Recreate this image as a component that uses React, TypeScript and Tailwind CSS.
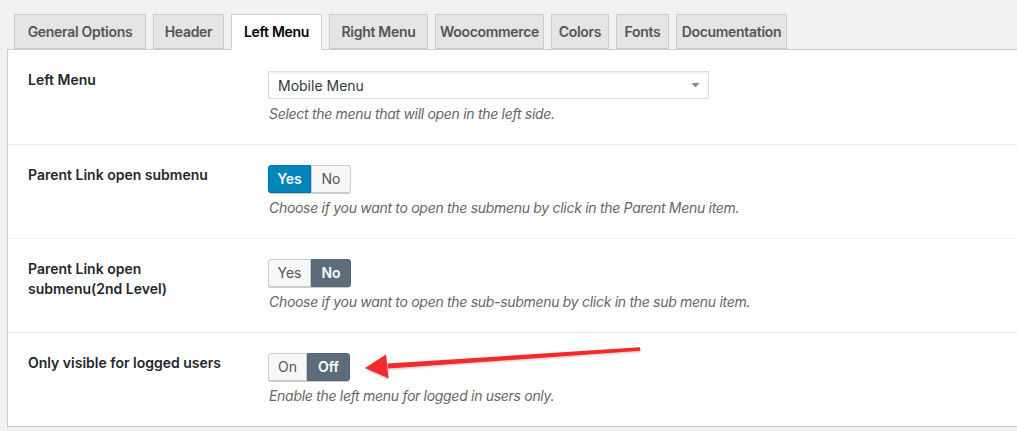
import { useState } from "react";

const tabs: [string, string][] = [
  ["General Options", "w-[132px]"],
  ["Header", "w-[71px]"],
  ["Left Menu", "w-[91px]"],
  ["Right Menu", "w-[99px]"],
  ["Woocommerce", "w-[109px]"],
  ["Colors", "w-[58px]"],
  ["Fonts", "w-[53px]"],
  ["Documentation", "w-[111px]"],
];

type ToggleProps = {
  options: [string, string];
  value: number;
  tone: "blue" | "slate";
  widths: [string, string];
};

const Toggle = ({ options, value, tone, widths }: ToggleProps) => {
  return (
    <div className="flex h-[28px]">
      {options.map((opt, i) => {
        const active = i === value;
        const rounded = i === 0 ? "rounded-l-[3px]" : "rounded-r-[3px]";
        let look = "bg-[#f7f7f7] border-[#cccccc] text-[#555555]";
        if (active && tone === "blue") look = "bg-[#0085ba] border-[#0073aa] text-white font-semibold";
        if (active && tone === "slate") look = "bg-[#5d6c7b] border-[#55636f] text-white font-semibold";
        return (
          <button
            key={opt}
            className={`${rounded} ${look} ${widths[i]} h-[28px] border text-[14px] leading-[26px] flex items-center justify-center shadow-[0_1px_0_#cccccc]`}
          >
            {opt}
          </button>
        );
      })}
    </div>
  );
};

const Row = ({
  label,
  children,
  desc,
}: {
  label: React.ReactNode;
  children: React.ReactNode;
  desc: string;
}) => (
  <div className="flex border-b border-[#eeeeee] pl-[20px] pt-[20px] pb-[20px] last:border-b-0">
    <div className="w-[240px] shrink-0 pr-[20px] text-[14px] leading-[20px] font-semibold text-[#23282d]">
      {label}
    </div>
    <div className="flex flex-col">
      {children}
      <p className="mt-[5px] pl-px text-[14px] leading-[20px] italic tracking-[-0.3px] text-[#666666]">
        {desc}
      </p>
    </div>
  </div>
);

export default function App() {
  const [active] = useState("Left Menu");

  return (
    <div
      className="relative h-[431px] w-[1017px] overflow-hidden bg-[#f1f1f1]"
      style={{ fontFamily: "Inter, 'Noto Sans', sans-serif" }}
    >
      {/* Tabs */}
      <div className="relative z-10 flex gap-[7px] pt-[14px] pl-[14px]">
        {tabs.map(([t, w]) => (
          <div
            key={t}
            className={
              t === active
                ? `${w} -mb-px flex h-[36px] justify-center whitespace-nowrap border border-[#cccccc] border-b-white bg-white py-[5px] text-[14px] leading-[24px] font-semibold tracking-[-0.3px] text-black`
                : `${w} flex h-[35px] justify-center whitespace-nowrap border border-[#cccccc] bg-[#e5e5e5] py-[5px] text-[14px] leading-[24px] font-semibold tracking-[-0.3px] text-[#555555]`
            }
          >
            {t}
          </div>
        ))}
      </div>

      {/* Panel */}
      <div className="ml-[7px] border-t border-b border-l border-[#cccccc] bg-white">
        <Row label="Left Menu" desc="Select the menu that will open in the left side.">
          <div className="mt-px flex h-[28px] w-[441px] items-center justify-between border border-[#dddddd] bg-white pr-[8px] pl-[9px] text-[14px] text-[#32373c] shadow-[inset_0_1px_2px_rgba(0,0,0,0.07)]">
            <span>Mobile Menu</span>
            <svg width="9" height="6" viewBox="0 0 9 6">
              <path d="M0.5 1 L8.5 1 L4.5 5.5 Z" fill="#888888" />
            </svg>
          </div>
        </Row>
        <Row
          label="Parent Link open submenu"
          desc="Choose if you want to open the submenu by click in the Parent Menu item."
        >
          <Toggle options={["Yes", "No"]} value={0} tone="blue" widths={["w-[43px]", "w-[40px]"]} />
        </Row>
        <Row
          label={
            <>
              Parent Link open
              <br />
              submenu(2nd Level)
            </>
          }
          desc="Choose if you want to open the sub-submenu by click in the sub menu item."
        >
          <Toggle options={["Yes", "No"]} value={1} tone="slate" widths={["w-[43px]", "w-[40px]"]} />
        </Row>
        <Row label="Only visible for logged users" desc="Enable the left menu for logged in users only.">
          <Toggle options={["On", "Off"]} value={1} tone="slate" widths={["w-[39px]", "w-[43px]"]} />
        </Row>
      </div>

      {/* Annotation arrow */}
      <svg
        className="pointer-events-none absolute top-0 left-0"
        width="1017"
        height="431"
        viewBox="0 0 1017 431"
      >
        <defs>
          <filter id="sh" x="-10%" y="-50%" width="120%" height="200%">
            <feDropShadow dx="0" dy="1" stdDeviation="1" floodColor="#000" floodOpacity="0.25" />
          </filter>
        </defs>
        <g filter="url(#sh)" fill="#f42a2a">
          <polygon points="640,347.2 640.4,350.8 388,368.6 387.6,363.6" />
          <polygon points="365,368 386,354.5 388.6,378.5" />
        </g>
      </svg>
    </div>
  );
}
